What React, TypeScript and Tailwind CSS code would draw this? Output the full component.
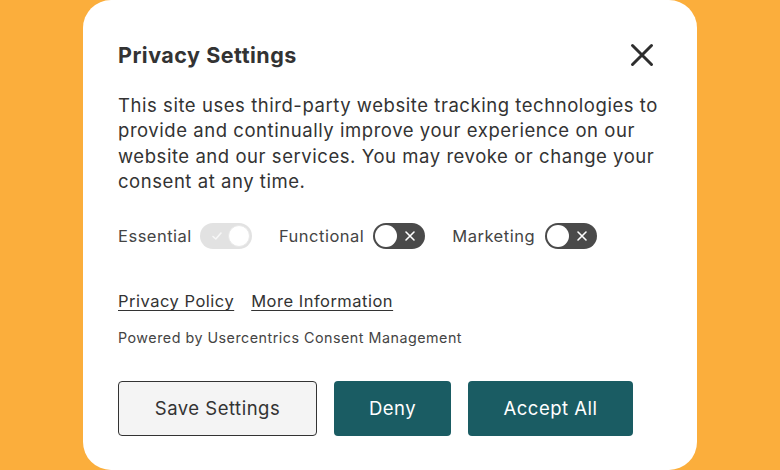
import React, { useState } from 'react';

type ToggleProps = {
    checked: boolean;
    disabled?: boolean;
    onChange?: () => void;
};

const Toggle: React.FC<ToggleProps> = ({ checked, disabled, onChange }) => {
    if (disabled) {
        return (
            <span className="relative inline-flex h-[26px] w-[52px] items-center rounded-full bg-[#e2e2e2]">
                <svg className="absolute left-[11px] h-[12px] w-[12px]" viewBox="0 0 12 12" fill="none">
                    <path d="M2 6.5 L4.8 9 L10 3" stroke="#f7f7f7" strokeWidth="1.6" strokeLinecap="round" strokeLinejoin="round" />
                </svg>
                <span className="absolute right-[2px] h-[22px] w-[22px] rounded-full border border-[#e8e8e8] bg-white" />
            </span>
        );
    }

    return (
        <button
            type="button"
            onClick={onChange}
            className={`relative inline-flex h-[26px] w-[52px] items-center rounded-full ${checked ? 'bg-[#1a5c63]' : 'bg-[#4a4a4a]'}`}
        >
            {checked ? (
                <svg className="absolute left-[11px] h-[12px] w-[12px]" viewBox="0 0 12 12" fill="none">
                    <path d="M2 6.5 L4.8 9 L10 3" stroke="#fff" strokeWidth="1.6" strokeLinecap="round" strokeLinejoin="round" />
                </svg>
            ) : (
                <svg className="absolute right-[9px] h-[12px] w-[12px]" viewBox="0 0 12 12" fill="none">
                    <path d="M2 2 L10 10 M10 2 L2 10" stroke="#fff" strokeWidth="1.6" strokeLinecap="round" />
                </svg>
            )}
            <span className={`absolute h-[22px] w-[22px] rounded-full bg-white ${checked ? 'right-[2px]' : 'left-[2px]'}`} />
        </button>
    );
};

export default function App() {
    const [functional, setFunctional] = useState(false);
    const [marketing, setMarketing] = useState(false);

    return (
        <div className="flex h-[470px] w-full justify-center overflow-hidden bg-[#fbae3c] font-['Inter',sans-serif] text-[#333]">
            <div className="flex h-[470px] w-[614px] flex-col rounded-[28px] bg-white px-[35px] pt-[41px]">
                <div className="flex items-center justify-between">
                    <h2 className="text-[21.5px] font-bold leading-[28px] tracking-[0.5px] text-[#333]">Privacy Settings</h2>
                    <button type="button" className="mr-[6px] flex h-[28px] w-[28px] items-center justify-center">
                        <svg className="h-[24px] w-[24px]" viewBox="0 0 24 24" fill="none">
                            <path d="M2.5 2.5 L21.5 21.5 M21.5 2.5 L2.5 21.5" stroke="#2e2e2e" strokeWidth="3" strokeLinecap="round" />
                        </svg>
                    </button>
                </div>

                <p className="mt-[24px] text-[18.5px] leading-[25.3px] tracking-[0.55px] text-[#333]">
                    This site uses third-party website tracking technologies to provide and continually improve your experience on our website and our services. You may revoke or change your consent at any time.
                </p>

                <div className="mt-[29px] flex items-center gap-[27px] text-[16.5px] tracking-[0.5px] text-[#444]">
                    <div className="flex items-center gap-[8px]">
                        <span>Essential</span>
                        <Toggle checked disabled />
                    </div>
                    <div className="flex items-center gap-[9px]">
                        <span>Functional</span>
                        <Toggle checked={functional} onChange={() => setFunctional(!functional)} />
                    </div>
                    <div className="flex items-center gap-[10px]">
                        <span>Marketing</span>
                        <Toggle checked={marketing} onChange={() => setMarketing(!marketing)} />
                    </div>
                </div>

                <div className="mt-[40px] flex gap-[17px] text-[16.5px] leading-[24px] tracking-[0.5px] text-[#333]">
                    <a href="#" className="underline underline-offset-[3px]">Privacy Policy</a>
                    <a href="#" className="underline underline-offset-[3px]">More Information</a>
                </div>

                <p className="mt-[15px] text-[14.3px] leading-[20px] tracking-[0.5px] text-[#444]">Powered by Usercentrics Consent Management</p>

                <div className="mt-[33px] flex gap-[17px] text-[18.5px] tracking-[0.5px]">
                    <button type="button" className="h-[55px] w-[199px] rounded-[4px] border border-[#333] bg-[#f4f4f4] text-[#333]">
                        Save Settings
                    </button>
                    <button type="button" className="h-[55px] w-[117px] rounded-[4px] bg-[#1a5c63] text-white">
                        Deny
                    </button>
                    <button type="button" className="h-[55px] w-[165px] rounded-[4px] bg-[#1a5c63] text-white">
                        Accept All
                    </button>
                </div>
            </div>
        </div>
    );
}
